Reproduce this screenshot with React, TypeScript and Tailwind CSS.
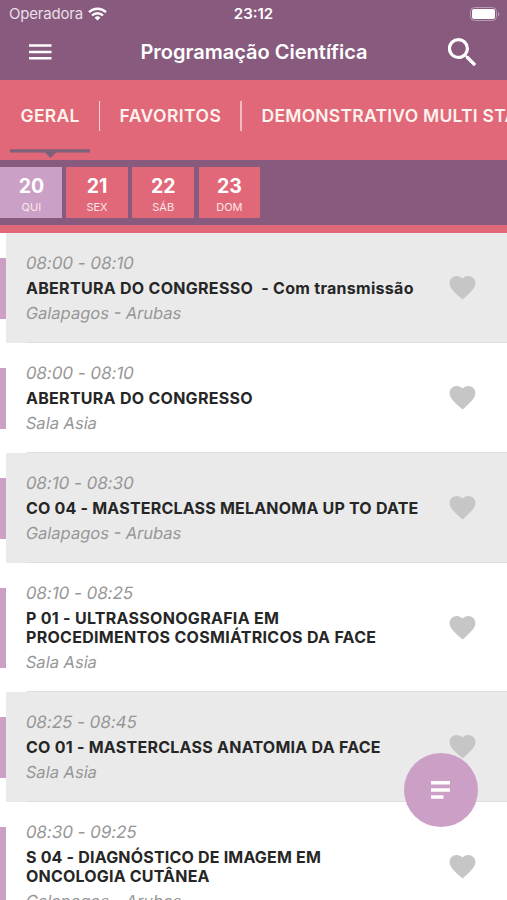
import { MdFavorite, MdSearch } from "react-icons/md";

type Session = { time: string, title: string, titleClass: string, room: string };

const days = [
    { day: "20", label: "QUI" },
    { day: "21", label: "SEX" },
    { day: "22", label: "SÁB" },
    { day: "23", label: "DOM" },
];

const sessions: Session[] = [
    { time: "08:00 - 08:10", title: "ABERTURA DO CONGRESSO  - Com transmissão", titleClass: "tracking-[0.29px]", room: "Galapagos - Arubas" },
    { time: "08:00 - 08:10", title: "ABERTURA DO CONGRESSO", titleClass: "tracking-[0.28px]", room: "Sala Asia" },
    { time: "08:10 - 08:30", title: "CO 04 - MASTERCLASS MELANOMA UP TO DATE", titleClass: "tracking-[0.2px]", room: "Galapagos - Arubas" },
    { time: "08:10 - 08:25", title: "P 01 - ULTRASSONOGRAFIA EM\nPROCEDIMENTOS COSMIÁTRICOS DA FACE", titleClass: "tracking-[0.29px]", room: "Sala Asia" },
    { time: "08:25 - 08:45", title: "CO 01 - MASTERCLASS ANATOMIA DA FACE", titleClass: "tracking-[0.25px]", room: "Sala Asia" },
    { time: "08:30 - 09:25", title: "S 04 - DIAGNÓSTICO DE IMAGEM EM\nONCOLOGIA CUTÂNEA", titleClass: "tracking-[0.19px]", room: "Galapagos - Arubas" },
];

function StatusBar() {
    return (
        <div className="grid h-[27px] grid-cols-3 items-center pl-[9px] pr-[7px]">
            <div className="flex items-center gap-[5px]">
                <span className="text-[15px] leading-[20px] tracking-[-0.2px] text-[#eadfe8]">Operadora</span>
                <svg width="19" height="14" viewBox="0 0 19 14" fill="none" stroke="#fff" strokeWidth="2.4">
                    <path d="M1 5.2a12.2 12.2 0 0 1 17 0" />
                    <path d="M4 8.5a7.8 7.8 0 0 1 11 0" />
                    <path d="M9.5 13.6 6.6 10.7a4.1 4.1 0 0 1 5.8 0Z" fill="#fff" stroke="none" />
                </svg>
            </div>
            <span className="-ml-[2px] text-center text-[15px] font-semibold leading-[20px]">23:12</span>
            <svg className="justify-self-end" width="30" height="14" viewBox="0 0 30 14">
                <rect x="0.5" y="0.5" width="26" height="13" rx="4" fill="none" stroke="#b69bb2" />
                <rect x="2" y="2" width="23" height="10" rx="2" fill="#fff" />
                <path d="M28 5v4.4c1.8-.8 1.8-3.6 0-4.4Z" fill="#b69bb2" />
            </svg>
        </div>
    );
}

function Header() {
    return (
        <header className="h-[80px] shrink-0 bg-[#875a7e] text-white">
            <StatusBar />
            <div className="flex h-[50px] items-center pl-[29px] pr-[25px]">
                <svg width="23" height="16" viewBox="0 0 23 16" fill="currentColor">
                    <path d="M0 .3h22.5v2.5H0zM0 6.7h22.5v2.5H0zM0 13h22.5v2.5H0z" />
                </svg>
                <h1 className="flex-1 pl-[13px] text-center text-[20px] font-semibold leading-[26px]">Programação Científica</h1>
                <MdSearch className="size-[39px]" />
            </div>
        </header>
    );
}

function Tabs() {
    return (
        <nav className="flex h-[80px] shrink-0 overflow-hidden bg-[#e06878] text-[17.5px] font-semibold tracking-[0.45px] text-[#fff3ee]">
            <div className="flex w-[99px] shrink-0 flex-col">
                <span className="h-[69px] pl-[20.5px] pt-[22px] leading-[28px] tracking-[0.3px]">GERAL</span>
                <svg className="ml-[10px]" width="80" height="10" viewBox="0 0 80 10" fill="#7d6079">
                    <path d="M1 .3h78a1 1 0 0 1 0 3.3H46l-5.5 5.4-5.5-5.400H1a1 1 0 0 1 0-3.300Z" />
                </svg>
            </div>
            <div className="mt-[21px] h-[30px] w-px shrink-0 bg-[#f9d5d5]" />
            <span className="w-[140px] shrink-0 pl-[19.5px] pt-[22px] leading-[28px]">FAVORITOS</span>
            <div className="mt-[21px] h-[30px] w-[2px] shrink-0 bg-[#f3bcc1]" />
            <span className="whitespace-nowrap pl-[19.5px] pt-[22px] leading-[28px] tracking-[0.25px]">DEMONSTRATIVO MULTI STAND</span>
        </nav>
    );
}

function Days() {
    return (
        <div className="flex h-[73px] shrink-0 gap-[4.5px] border-b-8 border-[#e06878] bg-[#875a7e] pt-[7px]">
            {days.map(({ day, label }, index) => (
                <div key={day} className={`flex h-[51px] w-[61.7px] flex-col items-center pt-[7px] ${index === 0 ? "bg-[#cba0c6] pl-px" : "bg-[#e06878]"}`}>
                    <span className="text-[19.5px] font-bold leading-[24px] text-white">{day}</span>
                    <span className="mt-px text-[11px] leading-[16px] text-[#fbe6e9]">{label}</span>
                </div>
            ))}
        </div>
    );
}

function SessionRow({ session, shaded }: { session: Session, shaded: boolean }) {
    return (
        <li className="flex shrink-0">
            <div className="my-[24.5px] w-[6px] shrink-0 bg-[#cc9fc5]" />
            <div className={`flex flex-1 flex-col ${shaded ? "bg-[#eaeaea]" : "bg-white"}`}>
                <div className="flex items-center justify-between pl-[20px] pr-[29.5px]">
                    <div className="flex flex-col items-start gap-[6px] pb-[19px] pt-[20px]">
                        <p className="-skew-x-[10deg] text-[17px] leading-[20px] tracking-[-0.05px] text-[#979797]">{session.time}</p>
                        <p className={`whitespace-pre text-[16px] font-bold leading-[19px] text-[#262626] ${session.titleClass}`}>{session.title}</p>
                        <p className="-skew-x-[10deg] text-[16.5px] leading-[19px] text-[#979797]">{session.room}</p>
                    </div>
                    <MdFavorite className="size-[31px] shrink-0 text-[#c6c6c6]" />
                </div>
                <div className="ml-[20px] h-px bg-[#dfdfdf]" />
            </div>
        </li>
    );
}

export default function App() {
    return (
        <div className="relative flex h-[900px] w-[507px] flex-col overflow-hidden bg-white font-['Inter',sans-serif]">
            <Header />
            <Tabs />
            <Days />
            <ul className="flex min-h-0 flex-1 flex-col overflow-hidden">
                {sessions.map((session, index) => (
                    <SessionRow key={index} session={session} shaded={index % 2 === 0} />
                ))}
            </ul>
            <button className="absolute bottom-[73px] right-[29px] flex size-[74px] items-center justify-center rounded-full bg-[#cb9fc6] pr-px text-white">
                <svg width="19" height="18" viewBox="0 0 19 18" fill="currentColor">
                    <path d="M0 0h19v3.5H0zM0 7.2h19v3.5H0zM0 14.3h12.5v3.5H0z" />
                </svg>
            </button>
        </div>
    );
}
